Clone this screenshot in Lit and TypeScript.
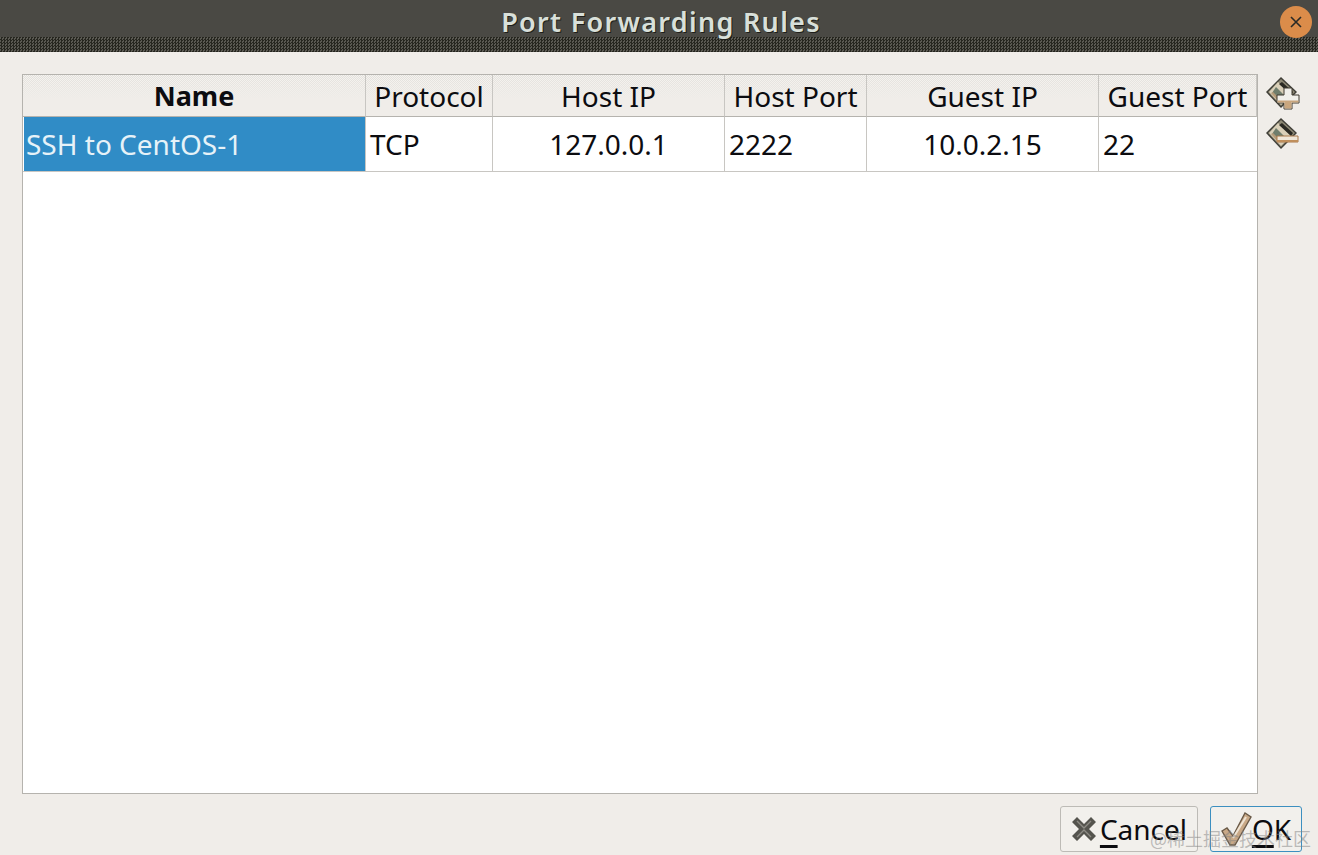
import { LitElement, html, css, svg } from 'lit';
import { customElement } from 'lit/decorators.js';

const columns = [
  { label: 'Name', cell: 'SSH to CentOS-1', center: false, bold: true },
  { label: 'Protocol', cell: 'TCP', center: false },
  { label: 'Host IP', cell: '127.0.0.1', center: true },
  { label: 'Host Port', cell: '2222', center: false },
  { label: 'Guest IP', cell: '10.0.2.15', center: true },
  { label: 'Guest Port', cell: '22', center: false },
];

const disk = svg`
  <path d="M15 0 L31 15 L15 31 L0 15 Z" fill="#3f3e37"/>
  <path d="M15 2 L29 15 L15 29 L2 15 Z" fill="#8f8a76"/>
  <path d="M12 5 L25 18 L15 28 L3 15 Z" fill="#d9cfb8"/>
  <path d="M10 10 L19 19 L14 24 L6 16 Z" fill="#6f7d6c"/>
  <path d="M7 15 L14 22 L12 24 L5 16 Z" fill="#b39a78"/>
  <path d="M16 5 L27 15 L25 18 L13 7 Z" fill="#2a2923"/>
`;

@customElement('app-root')
export class AppRoot extends LitElement {
  static styles = css`
    :host {
      display: flex;
      flex-direction: column;
      position: relative;
      width: 1318px;
      height: 855px;
      overflow: hidden;
      background: #f0ede9;
      font-family: 'Noto Sans', 'Open Sans', sans-serif;
      color: #0c0c10;
    }
    .titlebar {
      flex: none;
      display: flex;
      align-items: center;
      justify-content: center;
      position: relative;
      height: 52px;
      box-sizing: border-box;
      padding-bottom: 10px;
      padding-left: 4px;
      background: #4a4944;
    }
    .titlebar::after {
      content: '';
      position: absolute;
      left: 0;
      right: 0;
      bottom: 0;
      height: 15px;
      background: repeating-conic-gradient(#26261f 0 25%, #5a5952 0 50%) 0 0 / 3px 3px;
    }
    .title {
      position: relative;
      z-index: 1;
      font-size: 27px;
      font-weight: 600;
      letter-spacing: 1.3px;
      color: #d9e0da;
      text-shadow: 1px 1px 0 #1e1e1a;
    }
    .close {
      position: absolute;
      z-index: 1;
      right: 6px;
      top: 6px;
      width: 32px;
      height: 32px;
      border-radius: 50%;
      background: #db8c4a;
      display: flex;
      align-items: center;
      justify-content: center;
    }
    .body {
      flex: 1;
      display: flex;
      flex-direction: column;
      min-height: 0;
      padding: 22px 16px 3px 22px;
      gap: 12px;
    }
    .main {
      flex: 1;
      display: flex;
      gap: 8px;
      min-height: 0;
    }
    .table {
      flex: none;
      width: 1236px;
      box-sizing: border-box;
      border: 1px solid #b5b3ae;
      background: #fff;
    }
    .grid {
      display: grid;
      grid-template-columns: 343px 127px 232px 142px 232px 158px;
    }
    .head {
      height: 42px;
      box-sizing: border-box;
      display: flex;
      align-items: center;
      justify-content: center;
      font-size: 28px;
      border-right: 1px solid #c8c6c2;
      border-bottom: 1px solid #b5b3ae;
      background:
        linear-gradient(to bottom, rgba(240, 237, 233, 0), #f0ede9 60%),
        repeating-conic-gradient(#e2e0dc 0 25%, #f6f4f0 0 50%) 0 0 / 2px 2px;
      white-space: nowrap;
    }
    .head.bold {
      font-size: 27px;
      font-weight: 700;
    }
    .head:last-child,
    .cell:last-child {
      border-right: none;
    }
    .cell {
      height: 55px;
      box-sizing: border-box;
      display: flex;
      align-items: center;
      padding-left: 4px;
      font-size: 28px;
      border-right: 1px solid #c8c6c2;
      border-bottom: 1px solid #c8c6c2;
      white-space: nowrap;
    }
    .cell.center {
      justify-content: center;
      padding-left: 0;
    }
    .cell.selected {
      background: #308cc6;
      background-clip: content-box;
      padding-left: 1px;
      color: #e6f2f8;
      text-indent: 2px;
    }
    .side {
      display: flex;
      flex-direction: column;
      gap: 7px;
      padding-top: 3px;
    }
    .side svg {
      display: block;
      width: 34px;
      height: 34px;
    }
    .footer {
      flex: none;
      display: flex;
      justify-content: flex-end;
      gap: 12px;
    }
    .btn {
      height: 46px;
      box-sizing: border-box;
      display: flex;
      align-items: center;
      justify-content: center;
      gap: 3px;
      border: 1px solid #bdbbb6;
      border-radius: 3px;
      background: #f2f0ec;
      font-family: inherit;
      font-size: 28px;
      color: #0c0c10;
      padding: 0;
    }
    .btn.cancel {
      width: 138px;
    }
    .btn.ok {
      width: 92px;
      gap: 0;
      padding-right: 1px;
      border-color: #3c8fc0;
    }
    .btn u {
      text-underline-offset: 5px;
      text-decoration-thickness: 3px;
    }
    .mark {
      position: absolute;
      right: 7px;
      bottom: 4px;
      font-family: 'Noto Sans CJK SC', sans-serif;
      font-size: 18px;
      color: rgba(130, 130, 130, 0.5);
      white-space: nowrap;
    }
  `;

  render() {
    return html`
      <div class="titlebar">
        <span class="title">Port Forwarding Rules</span>
        <div class="close">
          <svg width="16" height="16" viewBox="0 0 16 16">
            <path d="M3 3 L13 13 M13 3 L3 13" stroke="#2a2a26" stroke-width="1.6" fill="none"/>
          </svg>
        </div>
      </div>
      <div class="body">
        <div class="main">
          <div class="table">
            <div class="grid">
              ${columns.map((c) => html`<div class="head ${c.bold ? 'bold' : ''}">${c.label}</div>`)}
              ${columns.map(
                (c, i) =>
                  html`<div class="cell ${c.center ? 'center' : ''} ${i === 0 ? 'selected' : ''}">${c.cell}</div>`,
              )}
            </div>
          </div>
          <div class="side">
            <svg viewBox="0 0 34 34">
              ${disk}
              <path d="M18 11 H26 V18 H33 V26 H26 V32 H18 V26 H11 V18 H18 Z" fill="#f0efea" stroke="#3f3a30" stroke-width="1"/>
              <path d="M11.5 23.5 H32.5 V25.5 H25.5 V31.5 H18.5 V25.5 H11.5 Z" fill="#c9a67e"/>
            </svg>
            <svg viewBox="0 0 34 34">
              ${disk}
              <path d="M11 18 H32 V24 H11 Z" fill="#efe6d8" stroke="#a9794a" stroke-width="1"/>
              <path d="M11 22 H32 V24 H11 Z" fill="#c08f5c"/>
            </svg>
          </div>
        </div>
        <div class="footer">
          <button class="btn cancel">
            <svg width="26" height="26" viewBox="0 0 26 26">
              <path d="M6 1 L13 8 L20 1 L25 6 L18 13 L25 20 L20 25 L13 18 L6 25 L1 20 L8 13 L1 6 Z" fill="#55544e"/>
              <path d="M6 5 L13 12 L20 5 M6 21 L13 14 L20 21" stroke="#8d8b84" stroke-width="1.4" fill="none"/>
            </svg>
            <span><u>C</u>ancel</span>
          </button>
          <button class="btn ok">
            <svg width="32" height="36" viewBox="0 0 32 36">
              <path d="M2 20 L7 17 L13 25 L25 2 L31 6 L15 34 L10 34 Z" fill="#c9a987" stroke="#6a5a48" stroke-width="1.4"/>
              <path d="M13 27 L26 6" stroke="#efe4d4" stroke-width="2" fill="none"/>
            </svg>
            <span><u>O</u>K</span>
          </button>
        </div>
      </div>
      <div class="mark">@稀土掘金技术社区</div>
    `;
  }
}
